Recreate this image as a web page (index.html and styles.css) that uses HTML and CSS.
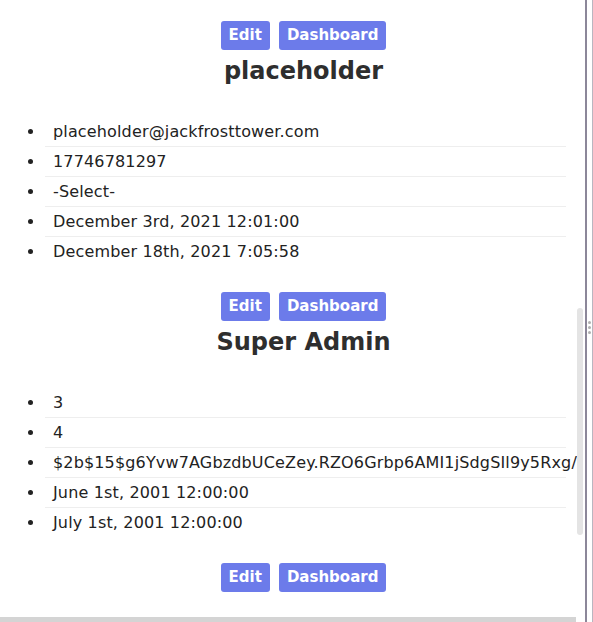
FILE: index.html
```html
<!DOCTYPE html>
<html>
<head>
<meta charset="utf-8">
<link rel="stylesheet" href="styles.css">
</head>
<body>
<div class="app">
  <div class="pane">
    <div class="viewrow">
      <div class="viewport">
        <div class="content">
          <section class="user">
            <div class="actions"><a class="btn">Edit</a><a class="btn">Dashboard</a></div>
            <h2 class="name">placeholder</h2>
            <ul class="fields">
              <li>placeholder@jackfrosttower.com</li>
              <li>17746781297</li>
              <li>-Select-</li>
              <li>December 3rd, 2021 12:01:00</li>
              <li>December 18th, 2021 7:05:58</li>
            </ul>
          </section>
          <section class="user">
            <div class="actions"><a class="btn">Edit</a><a class="btn">Dashboard</a></div>
            <h2 class="name">Super Admin</h2>
            <ul class="fields">
              <li>3</li>
              <li>4</li>
              <li class="nowrap">$2b$15$g6Yvw7AGbzdbUCeZey.RZO6Grbp6AMI1jSdgSIl9y5Rxg/wIzFS6</li>
              <li>June 1st, 2001 12:00:00</li>
              <li>July 1st, 2001 12:00:00</li>
            </ul>
          </section>
          <section class="user">
            <div class="actions"><a class="btn">Edit</a><a class="btn">Dashboard</a></div>
          </section>
        </div>
      </div>
      <div class="vscroll"><div class="vthumb"></div></div>
    </div>
    <div class="hscroll"></div>
  </div>
  <div class="splitter"><div class="grip"><i></i><i></i><i></i></div></div>
</div>
</body>
</html>
```
FILE: styles.css
```css
html, body { margin: 0; padding: 0; background: #fff; }
body { font-family: "DejaVu Sans", "Noto Sans", sans-serif; color: #222; }
.app { display: flex; width: 593px; height: 622px; overflow: hidden; }
.pane { width: 585px; height: 622px; display: flex; flex-direction: column; }
.viewrow { display: flex; height: 617px; }
.viewport { width: 577px; height: 617px; overflow: hidden; }
.content { width: 607px; padding-top: 21px; }
.vscroll { width: 8px; display: flex; flex-direction: column; padding-top: 308px; }
.vthumb { width: 6px; height: 227px; background: #e4e4e4; border-radius: 3px; }
.hscroll { width: 576px; height: 5px; background: #d4d4d4; }
.splitter { width: 8px; height: 622px; box-sizing: border-box; border-left: 2px solid #8c8799; border-right: 1px solid #b9b6c0; display: flex; justify-content: center; padding-top: 321px; }
.grip { display: flex; flex-direction: column; gap: 2px; }
.grip i { display: block; width: 3px; height: 3px; background: #b0b0b0; border-radius: 50%; }
.user { height: 271px; }
.actions { display: flex; justify-content: center; gap: 9px; }
.btn { background: #6c7bea; color: #fff; font-weight: bold; font-size: 15px; line-height: 29px; height: 29px; padding: 0 8px; border-radius: 3px; }
.name { margin: 6px 0 0; text-align: center; font-size: 24px; line-height: 30px; font-weight: bold; color: #2e2e2e; }
.fields { list-style: disc; margin: 31px 41px 0 45px; padding: 0; font-size: 16px; letter-spacing: 0.15px; }
.fields li { line-height: 29px; padding-left: 8px; }
.fields li + li { border-top: 1px solid #eeeeee; }
.nowrap { white-space: nowrap; }
```
